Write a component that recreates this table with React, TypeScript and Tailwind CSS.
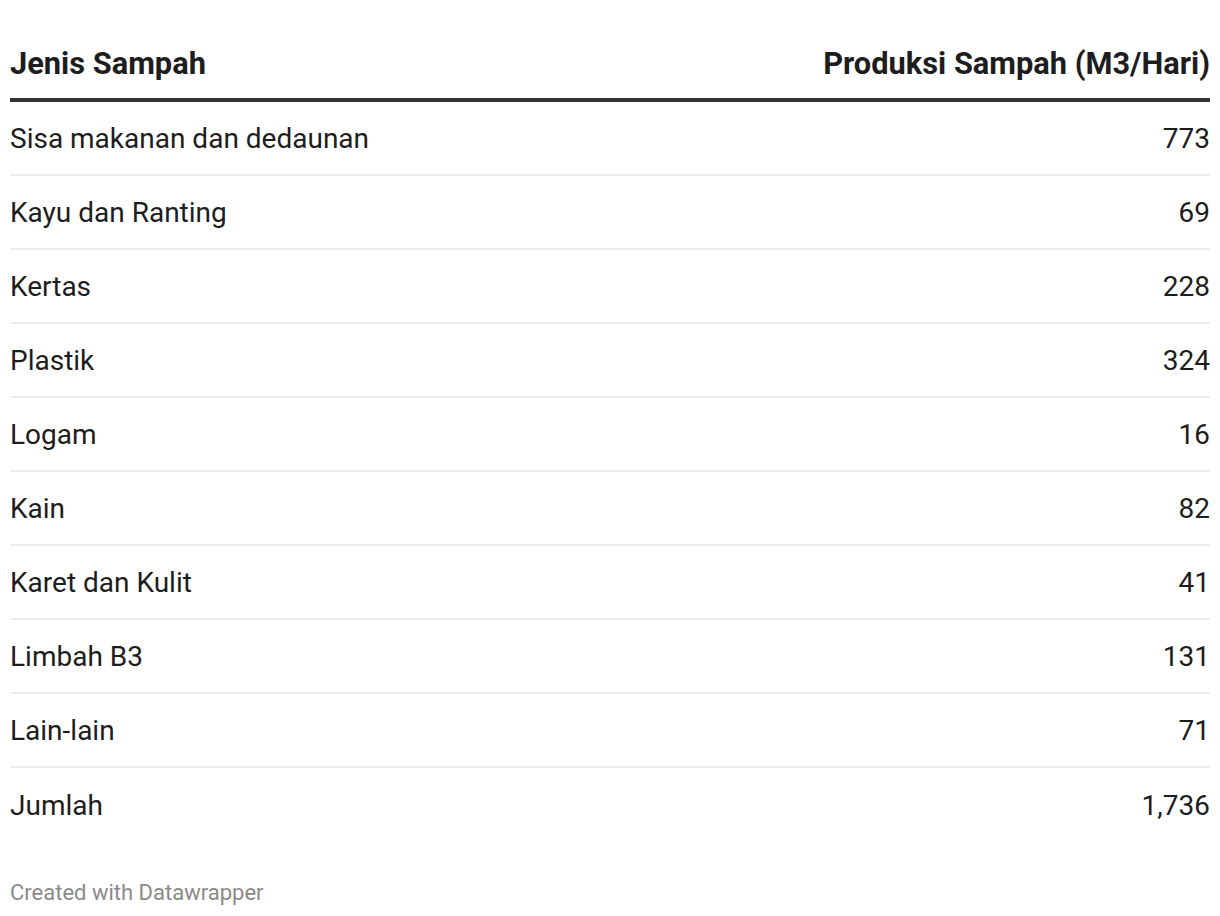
const rows = [
  { jenis: "Sisa makanan dan dedaunan", nilai: "773" },
  { jenis: "Kayu dan Ranting", nilai: "69" },
  { jenis: "Kertas", nilai: "228" },
  { jenis: "Plastik", nilai: "324" },
  { jenis: "Logam", nilai: "16" },
  { jenis: "Kain", nilai: "82" },
  { jenis: "Karet dan Kulit", nilai: "41" },
  { jenis: "Limbah B3", nilai: "131" },
  { jenis: "Lain-lain", nilai: "71" },
  { jenis: "Jumlah", nilai: "1,736" },
]

export default function App() {
  return (
    <div className="w-[1220px] h-[916px] bg-white px-[10px] text-[#1d1d1d] font-['Roboto',sans-serif]">
      <div className="flex justify-between items-end pt-[46px] pb-[16px] border-b-4 border-[#333333] text-[30.8px] leading-[36px] font-bold">
        <div>Jenis Sampah</div>
        <div>Produksi Sampah (M3/Hari)</div>
      </div>

      {rows.map((row, i) => (
        <div
          key={row.jenis}
          className={`flex justify-between items-center h-[74px] pt-[2px] text-[28px] leading-[70px] ${i < rows.length - 1 ? "border-b-2 border-[#ececec]" : ""}`}
        >
          <div>{row.jenis}</div>
          <div className="tabular-nums">{row.nilai}</div>
        </div>
      ))}

      <div className="mt-[38px] text-[22px] leading-[26px] text-[#8a8a8a]">
        Created with Datawrapper
      </div>
    </div>
  )
}
